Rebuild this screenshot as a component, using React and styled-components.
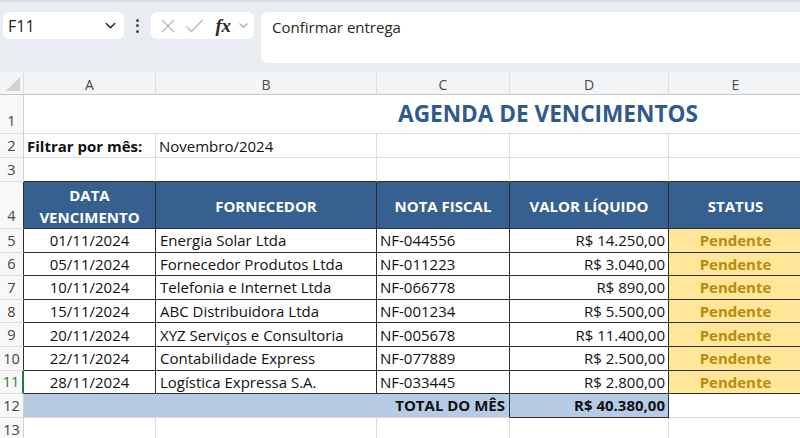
import React from 'react';
import styled, { createGlobalStyle } from 'styled-components';

const GlobalStyle = createGlobalStyle`
  html, body {
    margin: 0;
    padding: 0;
    background: #fff;
    overflow: hidden;
  }
  body {
    font-family: "Open Sans", "Liberation Sans", sans-serif;
  }
`;

const GRID = '#dedede';
const DARK = '#2e2e2e';
const HEAD_BLUE = '#35608f';
const TOTAL_BLUE = '#b7cbe5';

const Screen = styled.div`
  width: 800px;
  height: 438px;
  overflow: hidden;
  display: flex;
  flex-direction: column;
  background: #fff;
`;

const FormulaBar = styled.div`
  height: 72px;
  flex-shrink: 0;
  box-sizing: border-box;
  background: #e9ecf0;
  border-top: 2px solid #d8dce1;
  display: flex;
  align-items: flex-start;
  padding: 10px 0 0 3px;
`;

const NameBox = styled.div`
  width: 121px;
  height: 27px;
  box-sizing: border-box;
  background: #fff;
  border-radius: 6px;
  display: flex;
  align-items: center;
  justify-content: space-between;
  padding: 0 7px 0 5px;
  font-size: 16px;
  color: #222;
`;

const Dots = styled.div`
  width: 27px;
  height: 27px;
  display: flex;
  flex-direction: column;
  align-items: center;
  justify-content: center;
  gap: 2.5px;

  span {
    width: 3px;
    height: 3px;
    border-radius: 50%;
    background: #4a4a4a;
  }
`;

const FxBox = styled.div`
  width: 103px;
  height: 27px;
  box-sizing: border-box;
  background: #fff;
  border-radius: 6px;
  display: flex;
  align-items: center;
  padding: 0 3px 0 6px;
`;

const IconSlot = styled.div`
  width: ${p => p.$w}px;
  display: flex;
  align-items: center;
  justify-content: center;
`;

const FxText = styled.span`
  font-family: "Liberation Serif", "DejaVu Serif", serif;
  font-style: italic;
  font-weight: bold;
  font-size: 19px;
  color: #2b2b2b;
  letter-spacing: -0.5px;
  line-height: 1;
`;

const FormulaInput = styled.div`
  flex: 1;
  margin-left: 7px;
  height: 51px;
  box-sizing: border-box;
  background: #fff;
  border-radius: 6px 0 0 6px;
  padding: 5px 11px;
  font-size: 15px;
  line-height: 20px;
  color: #262626;
`;

const Sheet = styled.div`
  display: grid;
  grid-template-columns: 24px 132px 221px 133px 159px 134px;
  grid-template-rows: 23px 39px 24px 24px 47px repeat(8, 23.6px) 24px;
  width: 803px;
`;

const ColHead = styled.div`
  box-sizing: border-box;
  background: #f3f4f5;
  border-bottom: 1px solid #c9c9c9;
  border-right: 1px solid ${p => (p.$last ? 'transparent' : GRID)};
  display: flex;
  align-items: center;
  justify-content: center;
  font-size: 14px;
  color: #4a4a4a;
  padding-top: 2px;
`;

const Corner = styled.div`
  box-sizing: border-box;
  background: #f3f4f5;
  border-bottom: 1px solid #c9c9c9;
  border-right: 1px solid ${GRID};
  position: relative;

  &::after {
    content: '';
    position: absolute;
    right: 3px;
    bottom: 3px;
    width: 0;
    height: 0;
    border-left: 14px solid transparent;
    border-bottom: 14px solid #d2d2d2;
  }
`;

const RowHead = styled.div`
  box-sizing: border-box;
  background: #f8f8f8;
  border-bottom: 1px solid ${GRID};
  border-right: ${p => (p.$active ? '2px solid #1f7a45' : `1px solid ${p.$rb || '#cfcfcf'}`)};
  display: flex;
  align-items: ${p => (p.$bottom ? 'flex-end' : 'center')};
  justify-content: center;
  padding: ${p => (p.$bottom ? '0 0 2px' : '1px 0 0')};
  font-size: 14.5px;
  line-height: 20px;
  color: ${p => (p.$active ? '#1f7a45' : '#444')};
`;

const Cell = styled.div`
  box-sizing: border-box;
  grid-column: span ${p => p.$span || 1};
  background: ${p => p.$fill || '#fff'};
  border-right: 1px solid ${p => p.$rb || GRID};
  border-bottom: 1px solid ${p => p.$bb || GRID};
  display: flex;
  align-items: ${p => p.$valign || 'center'};
  justify-content: ${p =>
    p.$align === 'right' ? 'flex-end' : p.$align === 'center' ? 'center' : 'flex-start'};
  text-align: ${p => p.$align || 'left'};
  padding: ${p => p.$pad || '0 4px'};
  font-size: ${p => p.$size || 15}px;
  line-height: ${p => p.$lh || 20}px;
  font-weight: ${p => (p.$bold ? 700 : 400)};
  color: ${p => p.$color || '#111'};
  white-space: nowrap;
  overflow: hidden;
`;

const ChevronDown = ({ size = 12, color = '#444', width = 1.5 }) => (
  <svg width={size} height={size} viewBox="0 0 12 12" fill="none">
    <path d="M2 4.2 L6 8 L10 4.2" stroke={color} strokeWidth={width} strokeLinecap="round" strokeLinejoin="round" />
  </svg>
);

const CrossIcon = () => (
  <svg width="16" height="16" viewBox="0 0 16 16" fill="none">
    <path d="M2 2 L14 14 M14 2 L2 14" stroke="#b9b9b9" strokeWidth="1.3" />
  </svg>
);

const CheckIcon = () => (
  <svg width="19" height="16" viewBox="0 0 19 16" fill="none">
    <path d="M1.5 8.5 L6.5 13.5 L17.5 2" stroke="#b9b9b9" strokeWidth="1.3" />
  </svg>
);

const rows = [
  ['01/11/2024', 'Energia Solar Ltda', 'NF-044556', 'R$ 14.250,00'],
  ['05/11/2024', 'Fornecedor Produtos Ltda', 'NF-011223', 'R$ 3.040,00'],
  ['10/11/2024', 'Telefonia e Internet Ltda', 'NF-066778', 'R$ 890,00'],
  ['15/11/2024', 'ABC Distribuidora Ltda', 'NF-001234', 'R$ 5.500,00'],
  ['20/11/2024', 'XYZ Serviços e Consultoria', 'NF-005678', 'R$ 11.400,00'],
  ['22/11/2024', 'Contabilidade Express', 'NF-077889', 'R$ 2.500,00'],
  ['28/11/2024', 'Logística Expressa S.A.', 'NF-033445', 'R$ 2.800,00'],
];

const headers = [
  <>DATA<br />VENCIMENTO</>,
  'FORNECEDOR',
  'NOTA FISCAL',
  'VALOR LÍQUIDO',
  'STATUS',
];

export default function App() {
  return (
    <Screen>
      <GlobalStyle />
      <FormulaBar>
        <NameBox>
          <span>F11</span>
          <ChevronDown size={13} color="#333" width={1.4} />
        </NameBox>
        <Dots>
          <span />
          <span />
          <span />
        </Dots>
        <FxBox>
          <IconSlot $w={22}><CrossIcon /></IconSlot>
          <IconSlot $w={30}><CheckIcon /></IconSlot>
          <IconSlot $w={28}><FxText>fx</FxText></IconSlot>
          <IconSlot $w={12}><ChevronDown size={11} color="#9a9a9a" width={1.2} /></IconSlot>
        </FxBox>
        <FormulaInput>Confirmar entrega</FormulaInput>
      </FormulaBar>

      <Sheet>
        <Corner />
        {['A', 'B', 'C', 'D', 'E'].map((c, i) => (
          <ColHead key={c} $last={i === 4}>{c}</ColHead>
        ))}

        <RowHead $bottom>1</RowHead>
        <Cell $span={5} $rb="transparent" $align="center" $pad="0 0 0 270px" $size={22.6} $lh={30} $bold $color="#2f5a8c">
          AGENDA DE VENCIMENTOS
        </Cell>

        <RowHead>2</RowHead>
        <Cell $bold $valign="flex-end" $pad="0 3px 1px">Filtrar por mês:</Cell>
        <Cell $valign="flex-end" $pad="0 3px 1px">Novembro/2024</Cell>
        <Cell />
        <Cell />
        <Cell />

        <RowHead>3</RowHead>
        {[0, 1, 2, 3, 4].map(i => (
          <Cell key={i} $bb={DARK} />
        ))}

        <RowHead $rb={DARK} $bottom>4</RowHead>
        {headers.map((h, i) => (
          <Cell
            key={i}
            $fill={HEAD_BLUE}
            $rb={DARK}
            $bb={DARK}
            $align="center"
            $bold
            $color="#fff"
            $lh={22}
            $pad="1px 2px 0"
          >
            <div>{h}</div>
          </Cell>
        ))}

        {rows.map((r, i) => (
          <React.Fragment key={r[2]}>
            <RowHead $rb={DARK} $active={i === rows.length - 1}>{i + 5}</RowHead>
            <Cell $rb={DARK} $bb={DARK} $align="center">{r[0]}</Cell>
            <Cell $rb={DARK} $bb={DARK} $pad="0 4px">{r[1]}</Cell>
            <Cell $rb={DARK} $bb={DARK} $pad="0 3px">{r[2]}</Cell>
            <Cell $rb={DARK} $bb={DARK} $align="right" $pad="0 3px">{r[3]}</Cell>
            <Cell $rb={DARK} $bb={DARK} $fill="#ffe699" $align="center" $bold $color="#b98b0c">
              Pendente
            </Cell>
          </React.Fragment>
        ))}

        <RowHead>12</RowHead>
        <Cell $span={3} $fill={TOTAL_BLUE} $rb={DARK} $bb="#d6dbe2" $align="right" $bold $pad="0 4px">
          TOTAL DO MÊS
        </Cell>
        <Cell $fill={TOTAL_BLUE} $rb={DARK} $bb={DARK} $align="right" $bold $pad="0 3px">
          R$ 40.380,00
        </Cell>
        <Cell />

        <RowHead>13</RowHead>
        <Cell />
        <Cell />
        <Cell />
        <Cell />
        <Cell />
      </Sheet>
    </Screen>
  );
}
